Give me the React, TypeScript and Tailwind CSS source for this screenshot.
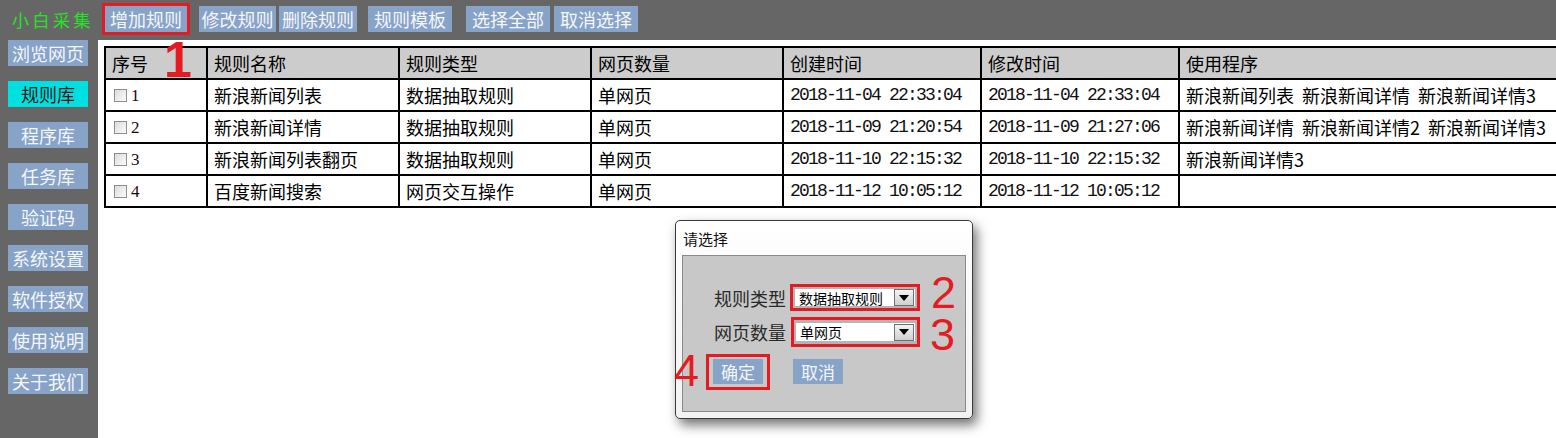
import React from "react";

const CJK = "font-['Noto_Sans_CJK_SC','Noto_Sans',sans-serif]";

const sideItems = ["浏览网页", "规则库", "程序库", "任务库", "验证码", "系统设置", "软件授权", "使用说明", "关于我们"];

const headers = ["序号", "规则名称", "规则类型", "网页数量", "创建时间", "修改时间", "使用程序"];

const rows: string[][] = [
  ["1", "新浪新闻列表", "数据抽取规则", "单网页", "2018-11-04 22:33:04", "2018-11-04 22:33:04", "新浪新闻列表|新浪新闻详情|新浪新闻详情3"],
  ["2", "新浪新闻详情", "数据抽取规则", "单网页", "2018-11-09 21:20:54", "2018-11-09 21:27:06", "新浪新闻详情|新浪新闻详情2|新浪新闻详情3"],
  ["3", "新浪新闻列表翻页", "数据抽取规则", "单网页", "2018-11-10 22:15:32", "2018-11-10 22:15:32", "新浪新闻详情3"],
  ["4", "百度新闻搜索", "网页交互操作", "单网页", "2018-11-12 10:05:12", "2018-11-12 10:05:12", ""],
];

const gridCols = "grid grid-cols-[102px_192px_192px_192px_198px_198px_1fr]";

function TopBtn({ label, w, className = "" }: { label: string; w: string; className?: string }) {
  return (
    <div className={`flex h-[26px] shrink-0 items-center justify-center bg-[#87a3c8] text-[18px] leading-none text-[#f4f6fa] ${w} ${className}`}>
      {label}
    </div>
  );
}

function Checkbox() {
  return (
    <div className="h-[13px] w-[13px] border border-[#8f8f8f] bg-gradient-to-br from-[#dcdcdc] to-[#fbfbfb]" />
  );
}

function Select({ value }: { value: string }) {
  return (
    <div className="flex h-full w-full items-center border-2 border-[#b4b4b4] bg-white">
      <span className="flex-1 pl-[4px] text-[14px] leading-none text-black">{value}</span>
      <div className="mr-[1px] flex h-[17px] w-[20px] items-center justify-center border border-[#707070] bg-gradient-to-b from-[#f4f4f4] to-[#cfcfcf]">
        <svg width="10" height="6" viewBox="0 0 10 6">
          <path d="M0 0 H10 L5 6 Z" fill="#000" />
        </svg>
      </div>
    </div>
  );
}

export default function App() {
  return (
    <div className={`relative h-[438px] w-[1556px] overflow-hidden bg-white ${CJK}`}>
      {/* top bar */}
      <div className="flex h-10 items-center bg-[#666666] pb-[2px]">
        <div className="ml-[12px] w-[90px] shrink-0 whitespace-nowrap text-[17px] leading-none tracking-[3.5px] text-[#22e622]">小白采集</div>
        <div className="shrink-0 border-[3px] border-[#e41b23]">
          <TopBtn label="增加规则" w="w-[82px]" />
        </div>
        <TopBtn label="修改规则" w="w-[77px]" className="ml-[9px]" />
        <TopBtn label="删除规则" w="w-[78px]" className="ml-[3px]" />
        <TopBtn label="规则模板" w="w-[84px]" className="ml-[11px]" />
        <TopBtn label="选择全部" w="w-[84px]" className="ml-[14px]" />
        <TopBtn label="取消选择" w="w-[84px]" className="ml-[4px]" />
      </div>

      <div className="flex h-[398px]">
        {/* sidebar */}
        <div className="flex w-[98px] shrink-0 flex-col gap-[15px] bg-[#666666] px-2">
          {sideItems.map((s) => (
            <div
              key={s}
              className={`flex h-[26px] w-[80px] items-center justify-center text-[18px] leading-none ${
                s === "规则库" ? "bg-[#00e0e0] text-[#1a1a1a]" : "bg-[#87a3c8] text-[#f4f6fa]"
              }`}
            >
              {s}
            </div>
          ))}
        </div>

        {/* content */}
        <div className="flex-1 pl-[6px] pt-[6px]">
          <div className="w-[1500px] border-b-2 border-black">
            <div className={`${gridCols} h-[32px] bg-[#cccccc]`}>
              {headers.map((h) => (
                <div key={h} className="flex items-center border-l-2 border-t-2 border-black px-[6px] text-[18px] leading-none text-black">
                  {h}
                </div>
              ))}
            </div>
            {rows.map((r) => (
              <div key={r[0]} className={`${gridCols} h-[32px]`}>
                <div className="flex items-center gap-[4px] border-l-2 border-t-2 border-black pl-[8px]">
                  <Checkbox />
                  <span className="font-['Liberation_Serif',serif] text-[17px] leading-none text-[#1a0a0a]">{r[0]}</span>
                </div>
                {[1, 2, 3].map((i) => (
                  <div key={i} className="flex items-center border-l-2 border-t-2 border-black px-[6px] text-[18px] leading-none text-black">
                    {r[i]}
                  </div>
                ))}
                {[4, 5].map((i) => (
                  <div key={i} className="flex items-center border-l-2 border-t-2 border-black px-[6px] font-['Liberation_Mono',monospace] text-[18px] leading-none tracking-[-1.8px] text-[#111]">
                    {r[i]}
                  </div>
                ))}
                <div className="flex items-center gap-[8px] border-l-2 border-t-2 border-black px-[6px] text-[18px] leading-none text-black">
                  {r[6] ? r[6].split("|").map((p, k) => <span key={k}>{p}</span>) : null}
                </div>
              </div>
            ))}
          </div>
        </div>
      </div>

      {/* modal dialog */}
      <div className="absolute left-[675px] top-[220px] flex h-[199px] w-[298px] flex-col rounded-[5px] border border-[#3a3a3a] bg-gradient-to-b from-[#ffffff] to-[#f2f2f2] shadow-[4px_6px_12px_rgba(0,0,0,0.55)]">
        <div className="flex h-[34px] items-center pl-[7px] text-[15px] leading-none text-[#111]">请选择</div>
        <div className="mx-[6px] mb-[6px] flex-1 border border-[#8a8a8a] bg-[#c8c8c8] pt-[28px]">
          <div className="flex h-[27px] items-center pl-[31px]">
            <span className="w-[72px] text-[18px] leading-none text-[#2a2a2a]">规则类型</span>
            <div className="ml-[4px] h-[27px] w-[130px] border-[3px] border-[#e41b23]">
              <Select value="数据抽取规则" />
            </div>
          </div>
          <div className="mt-[6px] flex h-[30px] items-center pl-[31px]">
            <span className="w-[72px] text-[18px] leading-none text-[#2a2a2a]">网页数量</span>
            <div className="ml-[5px] h-[30px] w-[129px] border-[3px] border-[#e41b23] bg-[#b4b4b4] py-[1px]">
              <Select value="单网页" />
            </div>
          </div>
          <div className="mt-[7px] flex items-start pl-[23px]">
            <div className="border-[3px] border-[#e41b23] px-[4px] pb-[3px] pt-[2px]">
              <div className="flex h-[25px] w-[50px] items-center justify-center bg-[#87a3c8] text-[17px] leading-none text-[#f4f6fa]">确定</div>
            </div>
            <div className="ml-[23px] mt-[5px] flex h-[25px] w-[50px] items-center justify-center bg-[#87a3c8] text-[17px] leading-none text-[#f4f6fa]">取消</div>
          </div>
        </div>
      </div>

      {/* red annotations */}
      <div className="absolute left-[164px] top-[40px] font-['Liberation_Sans',sans-serif] text-[50px] font-bold leading-[40px] text-[#e41b23]">1</div>
      <div className="absolute left-[931px] top-[278px] font-['Liberation_Sans',sans-serif] text-[45px] leading-[30px] text-[#e41b23]">2</div>
      <div className="absolute left-[930px] top-[320px] font-['Liberation_Sans',sans-serif] text-[45px] leading-[30px] text-[#e41b23]">3</div>
      <div className="absolute left-[674px] top-[356px] font-['Liberation_Sans',sans-serif] text-[45px] leading-[30px] text-[#e41b23]">4</div>
    </div>
  );
}
